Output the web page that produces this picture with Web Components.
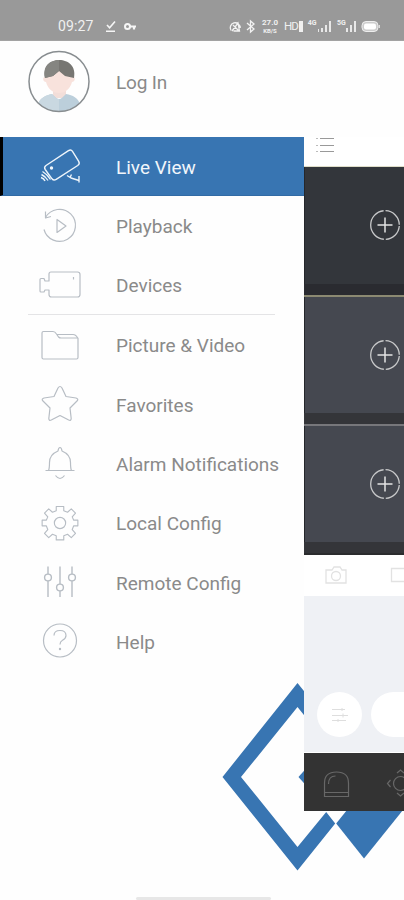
<!DOCTYPE html>
<html lang="en">
<head>
<meta charset="utf-8">
<title>Live View menu</title>
<style>
html,body{margin:0;background:#fff}
body{font-family:Roboto,"Liberation Sans",sans-serif;overflow:hidden}
</style>
</head>
<body>
<camera-app></camera-app>
<script>
const define=(name,html)=>customElements.define(name,class extends HTMLElement{
  constructor(){
    super();
    this.attachShadow({mode:'open'}).innerHTML=html;
  }
});

define('status-bar',`
<style>
:host{display:flex;align-items:flex-start;box-sizing:border-box;height:41px;padding:18px 0 0 58px;background:#999;color:#f0f0f0;font-size:14px;line-height:17px;border-bottom:1px solid #a3a3a3}
.time{width:46px;letter-spacing:.1px}
svg{display:block;flex:none}
.rate{width:20px;margin-left:4px;text-align:center;font-size:8px;font-weight:700;line-height:8px;padding-top:.5px}
.rate span{display:block}.rate span+span{font-size:6px;line-height:7px}
.hd{margin-left:4px;width:13px;font-size:11.500px;letter-spacing:-1px}
.net{font-size:7px;line-height:8px;font-weight:700;width:12px;padding-top:1px}
</style>
<span class="time">09:27</span>
<svg width="124" height="18" viewBox="104 18 124 18" fill="none" stroke="#f6f6f6" stroke-width="1.600">
<path d="M107 25l2.600 2.800 5.400-6.300M106 31.300h9"/>
<circle cx="127.500" cy="26.500" r="2.500" stroke-width="2"/><path d="M130 26.500h6M134 26.500v3" stroke-width="2.200"/></svg>
<svg width="28" height="18" viewBox="228 18 28 18" fill="none" stroke="#f2f2f2" stroke-width="1.300">
<path d="M231 30.500a5 5 0 1 1 9.200-2.500M232 31l6-8 1.500 8h-6M233 25l6 6"/>
<path d="M247 23l7 6-3.500 3V21l3.500 3-7 6" stroke-width="1.300"/></svg>
<span class="rate"><span>27.0</span><span>KB/S</span></span>
<span class="hd">HD</span>
<svg width="9" height="18" viewBox="297 18 9 18"><path d="M299 21h4v11h-4z" fill="#f0f0f0"/></svg>
<span class="net">&nbsp;4G</span>
<svg width="14" height="18" viewBox="317 18 14 18"><path d="M316 29h2v3h-2zM320 28h2v4h-2zM324 25h2v7h-2zM328 21h2v11h-2z" fill="#e8e8e8"/></svg>
<span class="net" style="width:9px;margin-left:5px">5G</span>
<svg width="10" height="18" viewBox="344 18 10 18"><path d="M344 28h2v4h-2zM348 25h2v7h-2zM352 21h2v11h-2z" fill="#e8e8e8"/></svg>
<svg width="24" height="18" viewBox="355 18 24 18"><rect x="361" y="21.500" width="16" height="10" rx="4" fill="#ccc" stroke="#eee"/><rect x="363" y="23.500" width="12" height="6" rx="2" fill="#fff"/><path d="M378.300 25v3" stroke="#eee"/></svg>
`);

define('user-profile',`
<style>
:host{display:flex;height:96px;box-sizing:border-box;padding:9px 0 0 28px;color:#8a8a8a;font-size:19px}
svg{display:block;flex:none}.name{margin-left:26px;line-height:65px;letter-spacing:-.15px}
</style>
<svg width="62" height="63" viewBox="28 50 62 63">
<defs><clipPath id="c"><circle cx="59" cy="81.500" r="30"/></clipPath></defs>
<g clip-path="url(#c)">
<path d="M53 86h13v9l8 3H46l7-3z" fill="#f2ded9"/>
<path d="M45 77c0-15 28-15 28 0 3 0 2 5-1 5-2 8-8 11-13 11s-11-3-13-11c-3 0-4-5-1-5z" fill="#f8e2dc"/>
<path d="M38 104c2-6 8-9 14-10 3 3 5 5 7 5s4-2 7-5c7 1 12 4 14 10v10H38z" fill="#bccfdb"/>
<path d="M38 104c2-6 8-9 14-10 3 3 5 5 7 5v15H38z" fill="#c9d8e1"/>
<path d="M59 71l-6 5-8 2c-5-24 34-24 29 0l-9-2z" fill="#777672"/>
<path d="M59 60v11l-6 5-8 2c-3-12 5-18 14-18z" fill="#858581"/></g>
<circle cx="59" cy="81.500" r="30" fill="none" stroke="#888d90" stroke-width="1.500"/></svg>
<span class="name"><slot></slot></span>
`);

const icons={
camera:'<g stroke="#eef5fb" stroke-width="1.400"><path d="M46 165.500q-2.300 1.700-.8 4l6.800 9.300q1.700 2.200 4.200.6l21.500-13.900q2.500-1.700 1-4.200l-6.200-10q-1.500-2.300-4-.7z"/><circle cx="51.500" cy="168" r="1" fill="#fff"/><path d="M41 177.500q3 1 4 3.500M41.500 174.500q4 2 6.500 6M42.500 171.500q5 3 8 8M67 175.500l4 2.500 8 2.500M70 177.500l1.500-3M79 176v6.500"/></g>',
playback:'<path d="M45.500 217.500a16 16 0 1 1-1.500 12M45.500 211.500v6.500l5.500-1.500M57 219.500v13l9-6.500z"/>',
devices:'<path d="M51 272h26.500q2.500 0 2.500 2.500v20q0 2.500-2.500 2.500h-26q-2.500 0-2.500-2.500V290h-4l-1 2h-3q-1 0-1-1v-11.500q0-1 1-1h3l1 2.500h4V274q0-2 2-2zM73.500 277v2.500"/>',
folder:'<path d="M43.500 331.500H53q2 0 3.500 2.500l2 3q1 1 2.500 1h17v19.500q0 1.500-1.500 1.500h-33q-1.500 0-1.500-1.500V333q0-1.500 1.500-1.500zM57 334.500h16q3 0 5 4"/>',
star:'<path d="M58 389q2-3 4 0l4 8.500 10 1.500q3 1 1 3l-7 7 1.200 10.500q0 2.500-2.500 1.500l-8.700-4.500-8.700 4.500q-2.500 1-2.500-1.500l1.200-10.500-7-7q-2-2 1-3l10-1.500z"/>',
bell:'<path d="M48.500 470.500q1-2 1-8 0-8 8.500-11.500.500-3.500 2-3.500t2 3.500q8.500 3.500 8.500 11.500 0 6 1 8M45.500 470.500h29M55.500 475.500q4.500 6 9 0"/>',
gear:'<g transform="translate(60 523) scale(.94) translate(-60 -523)"><path d="M56 510v-4.500h8v4.500l4 1.600 4-3.600 4.500 4.500-3.500 4 1.600 3.500H79v6h-4.400l-1.600 4 3.500 4-4.500 4.500-4-3.500-4 1.600v4.400h-8v-4.400l-4-1.600-4 3.500-4.500-4.500 3.500-4-1.600-4H41v-6h4.400l1.600-3.500-3.500-4L48 508l4 3.600z"/><circle cx="60" cy="523" r="6"/></g>',
sliders:'<g stroke-width="1.400"><path d="M48 566.500v7.500m0 7v16M60 566.500v17.500m0 7v6M72 566.500v7.500m0 7v16"/><circle cx="48" cy="577.500" r="3.400"/><circle cx="60" cy="587.500" r="3.400"/><circle cx="72" cy="577.500" r="3.400"/></g>',
help:'<circle cx="60" cy="641.500" r="16.500"/><path d="M54 636.500q0-5 6-5t6 5q0 3-3.500 4.800-2.500 1.300-2.500 4.200"/><circle cx="60" cy="650" r=".6"/>'
};
customElements.define('menu-item',class extends HTMLElement{
  connectedCallback(){
    const top=this.getAttribute('origin');
    this.attachShadow({mode:'open'}).innerHTML=`
<style>
:host{display:flex;align-items:center;box-sizing:border-box;height:59.300px;padding-left:36px;color:#8a8a8a;font-size:19px;white-space:nowrap}
:host([active]){height:59px;background:#3875b2;color:#f1f6fb;border-left:3px solid #000;border-bottom:1px solid #326ba5;padding-left:33px}
svg{display:block;flex:none}
.label{margin-left:32px;line-height:24px;padding-top:3px;letter-spacing:var(--track,0)}
</style>
<svg width="48" height="48" viewBox="36 ${top} 48 48" fill="none" stroke="#b7bdc4" stroke-width="1.200" stroke-linejoin="round">${icons[this.getAttribute('icon')]}</svg>
<span class="label"><slot></slot></span>`;
  }
});

define('nav-drawer',`
<style>
:host{display:block;width:304px}
hr{border:0;height:1px;margin:-.5px 29px .2px 28px;background:#e4e4e6}
</style>
<user-profile>Log In</user-profile>
<menu-item active icon="camera" origin="142">Live View</menu-item>
<menu-item icon="playback" origin="202">Playback</menu-item>
<menu-item icon="devices" origin="261">Devices</menu-item>
<hr>
<menu-item icon="folder" origin="321">Picture &amp; Video</menu-item>
<menu-item icon="star" origin="381">Favorites</menu-item>
<menu-item icon="bell" origin="440">Alarm Notifications</menu-item>
<menu-item icon="gear" origin="499">Local Config</menu-item>
<menu-item icon="sliders" origin="558">Remote Config</menu-item>
<menu-item icon="help" origin="618">Help</menu-item>
`);

define('video-tile',`
<style>
:host{display:flex;box-sizing:border-box;height:130px;padding:42px 0 0 64.500px;background:var(--tile,#454850);border-bottom:2px solid var(--line,#77777b);box-shadow:inset 0 -11px var(--strip,#343539),inset 1px 0 #25272b}
svg{display:block}
</style>
<svg width="32" height="32" viewBox="0 0 32 32" fill="none" stroke="#c8c9ca"><circle cx="16" cy="16" r="14.300" stroke-width="1.300" stroke-dasharray="20.500 2 42 2 21.500 2" stroke-dashoffset="-1"/><path d="M8.500 16h15M16 8.500v15" stroke="#e4e4e4" stroke-width="1.500"/></svg>
`);

define('live-panel',`
<style>
:host{display:flex;flex-direction:column;width:100px;height:674px;margin-top:96px;overflow:hidden}
.top{height:29px;border-bottom:1px solid #dfdec9;background:#fff}
.tools{height:41px;background:#fff}
.area{box-sizing:border-box;height:157px;background:#eff1f5;border-bottom:1px solid #fff;display:flex;gap:9px;padding:96px 0 0 13px}
.round{flex:none;width:45px;height:45px;border-radius:50%;background:#fff}
.bottom{height:58px;background:#333}
svg{display:block}
</style>
<div class="top"><svg width="100" height="29" viewBox="304 137 100 29"><path d="M320 138.500h14M320 145.500h14M320 151.500h14" stroke="#999"/><path d="M316 138.500h2M316 145.500h2M316 151.500h2" stroke="#bbb"/></svg></div>
<video-tile style="--tile:#33363b;--strip:#2a2b30;--line:#8c8a72"></video-tile>
<video-tile></video-tile>
<video-tile style="height:129px;--line:#2b2c2e"></video-tile>
<div class="tools"><svg width="100" height="41" viewBox="304 555 100 41" fill="none" stroke="#e2e2e2" stroke-width="1.300"><path d="M326 570h6l2-3h6l2 3h4v13h-20z"/><circle cx="336" cy="576" r="4.500"/><path d="M406 568.500h-14.500v13H406"/></svg></div>
<div class="area"><div class="round"><svg width="45" height="45" viewBox="317 692 45 45" fill="none" stroke="#dedede"><path d="M332 709.500h13M332 715.500h16M332 720.500h14M342 708v3M343 713.500v4M338 719v3"/></svg></div><div class="round" style="width:60px;border-radius:23px"></div></div>
<div class="bottom"><svg width="100" height="58" viewBox="304 753 100 58" fill="none" stroke="#686868" stroke-width="1.200"><path d="M324.500 796.500V783q0-11 12-11t12 11v13.500zM324.500 792.500h24M328.500 784q0-8 7-8"/><circle cx="400.500" cy="783.500" r="7"/><path d="M390.500 780l-3 3.500 3 3.500M397 773l3.500-3 3.500 3M397 793l3.500 3 3.500-3"/></svg></div>
`);

define('brand-mark',`
<style>:host{display:block;position:absolute;left:222px;top:683px;z-index:-1}svg{display:block}</style>
<svg width="182" height="188" viewBox="222 683 182 188" fill="#3875b2"><path d="M297.500 683L320 711v24L297.500 707 241 777l56.500 70 28.700-35 9 11.500-37.700 47L222.500 777z"/><path d="M298.500 777l8-9v18z"/><path d="M336.200 823.500L347 810h56l-39 48.500z"/></svg>
`);

define('camera-app',`
<style>
:host{display:flex;flex-direction:column;position:relative;z-index:0;width:404px;height:900px;background:#fefefe;overflow:hidden}
.main{display:flex;height:856px}
.handle{width:135px;height:3px;border-radius:2px;margin:0 auto;background:#e7e7e7;transform:translateX(1px)}
</style>
<status-bar></status-bar>
<div class="main"><nav-drawer></nav-drawer><live-panel></live-panel></div>
<div class="handle"></div>
<brand-mark></brand-mark>
`);
</script>
</body>
</html>
